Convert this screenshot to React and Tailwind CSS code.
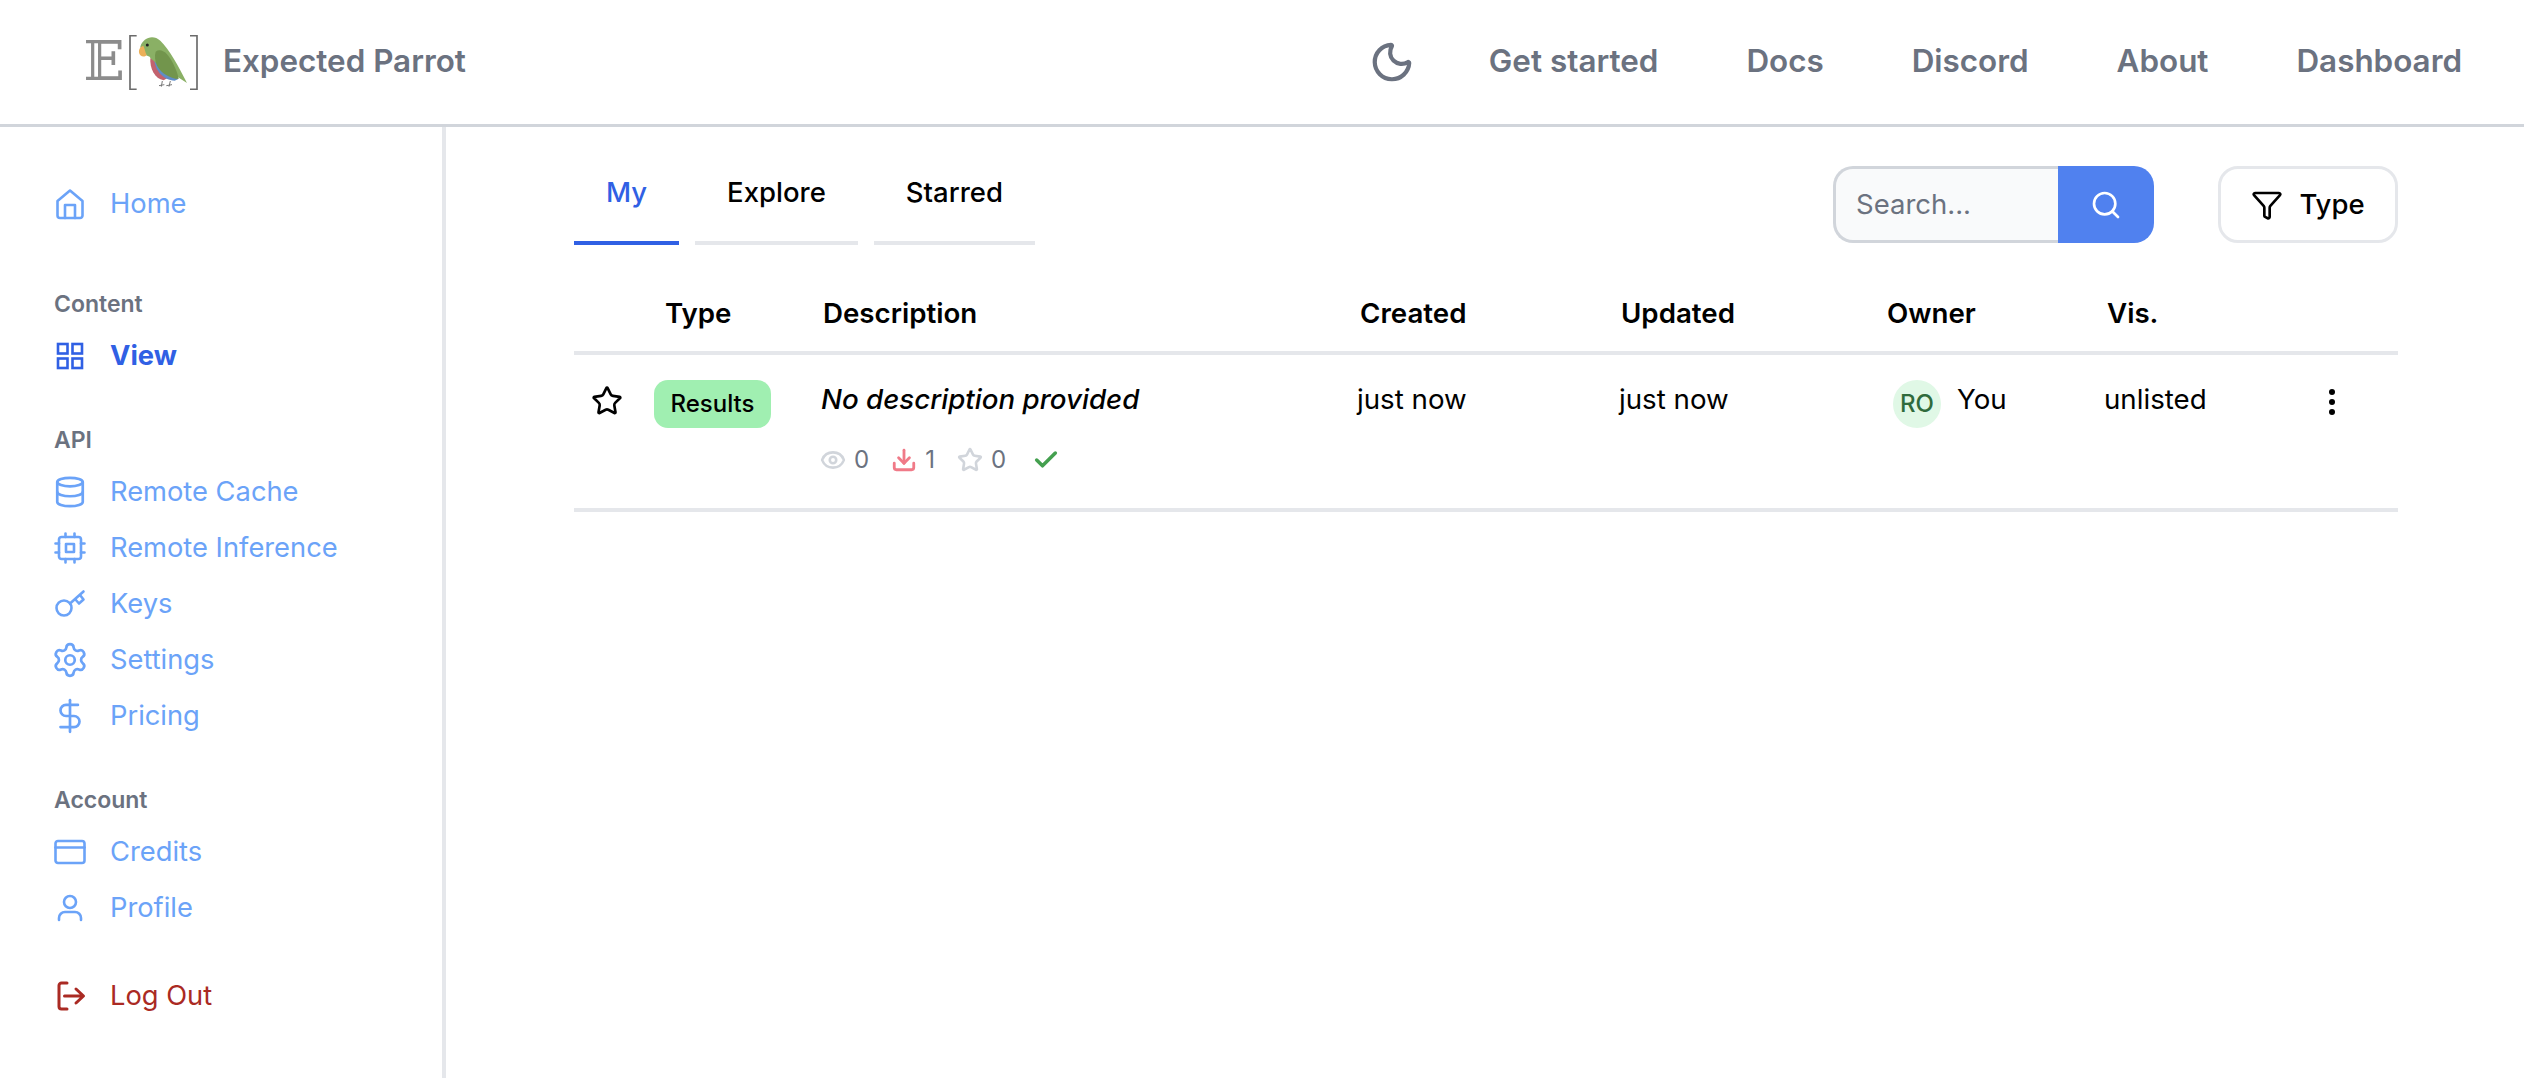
import React from 'react'
import { Moon, Settings, DollarSign, Search, Filter, Eye, Download, Star, Check, Database } from 'lucide-react'

const NAV_LINKS = ['Get started', 'Docs', 'Discord', 'About', 'Dashboard']

function Logo() {
  return (
    <div className="flex items-center">
      <span className="flex h-[40px] w-[36px] items-center justify-center font-['DejaVu_Serif',serif] text-[54px] leading-none text-[#8c8c8c]">𝔼</span>
      <svg className="ml-[7px] block" width="69" height="55" viewBox="388 100 207 165" fill="none">
        <path d="M411 102H391V263H411M571 102H592V263H571" stroke="#6b6b6b" strokeWidth="5" />
        <path d="M488 238L485 255M478 252L494 249M512 238L508 255M500 252L517 249" stroke="#777" strokeWidth="3" />
        <path d="M452 170C450 200 465 232 492 236L510 225L475 170Z" fill="#c2626e" />
        <path d="M464 175C466 205 490 236 525 237L536 232L500 190Z" fill="#5f8dc6" />
        <path d="M422 135C430 108 460 97 482 117C510 145 535 190 562 244L528 222L470 185C462 175 452 172 450 165C435 160 425 150 422 135Z" fill="#8ab065" />
        <path d="M468 150C485 138 505 155 520 185C530 205 535 220 537 232C510 230 485 215 472 192C466 178 464 162 468 150Z" fill="#72954c" />
        <path d="M431 132C418 136 414 150 422 161C428 166 436 166 441 160C436 150 436 142 431 132Z" fill="#ecb059" />
        <circle cx="443" cy="130" r="4.5" fill="#222" />
      </svg>
    </div>
  )
}

function Header() {
  return (
    <header className="flex h-[127px] items-center justify-between border-b-[3px] border-[#d1d5db] pl-[86px] pr-[62px]">
      <div className="flex items-center">
        <Logo />
        <span className="ml-[25px] text-[31.4px] font-semibold text-[#6b7280]">Expected Parrot</span>
      </div>
      <nav className="flex items-center gap-[88px] text-[31.4px] font-semibold text-[#6b7280]">
        <Moon className="-mr-[14px] h-[46px] w-[46px]" strokeWidth={2.2} />
        {NAV_LINKS.map((link) => (
          <a key={link} href="#">
            {link}
          </a>
        ))}
      </nav>
    </header>
  )
}

const iconProps = {
  width: 32,
  height: 32,
  viewBox: '0 0 32 32',
  fill: 'none',
  stroke: 'currentColor',
  strokeWidth: 2.6,
  strokeLinecap: 'round',
  strokeLinejoin: 'round',
}

const HomeIcon = () => (
  <svg {...iconProps}>
    <path d="M3.5 13L16 2.5L28.5 13V27.5A2.5 2.5 0 0 1 26 30H6A2.5 2.5 0 0 1 3.5 27.5Z" />
    <path d="M11 30V17H21V30" />
  </svg>
)

const GridIcon = () => (
  <svg {...iconProps} strokeLinejoin="miter">
    <rect x="4" y="4" width="9.5" height="9.5" />
    <rect x="18.5" y="4" width="9.5" height="9.5" />
    <rect x="4" y="18.5" width="9.5" height="9.5" />
    <rect x="18.5" y="18.5" width="9.5" height="9.5" />
  </svg>
)

const ChipIcon = () => (
  <svg {...iconProps}>
    <rect x="5" y="5" width="22" height="22" rx="2.5" />
    <rect x="12" y="12" width="8" height="8" />
    <path d="M11.5 1.5V5M20.5 1.5V5M11.5 27V30.5M20.5 27V30.5M1.5 11.5H5M1.5 20.5H5M27 11.5H30.5M27 20.5H30.5" />
  </svg>
)

const KeyIcon = () => (
  <svg {...iconProps}>
    <circle cx="10" cy="20" r="7.5" />
    <path d="M16 15.5L29.5 3.5M21 11L25 15.5L29.5 11.5L26 7" />
  </svg>
)

const CardIcon = () => (
  <svg {...iconProps}>
    <rect x="1.5" y="5" width="29" height="22" rx="2.5" />
    <path d="M1.5 11.5H30.5" />
  </svg>
)

const UserIcon = () => (
  <svg {...iconProps}>
    <circle cx="16" cy="10" r="6" />
    <path d="M5 28V26A6 6 0 0 1 11 20H21A6 6 0 0 1 27 26V28" />
  </svg>
)

const LogOutIcon = () => (
  <svg {...iconProps} strokeWidth={3}>
    <path d="M13 3H7.5A2.5 2.5 0 0 0 5 5.5V26.5A2.5 2.5 0 0 0 7.5 29H13" />
    <path d="M10.5 16H29M22 9L29.5 16L22 23" />
  </svg>
)

function SideItem({ icon, label, className = 'text-[#6ba3f8]' }) {
  return (
    <a href="#" className={`flex h-[56px] items-center gap-[24px] ${className}`}>
      <span className="flex h-8 w-8 items-center justify-center">{icon}</span>
      {label}
    </a>
  )
}

function SideLabel({ children, className = '' }) {
  return (
    <div className={`flex h-[48px] items-center text-[23px] font-semibold text-[#6b7280] ${className}`}>
      {children}
    </div>
  )
}

function Sidebar() {
  return (
    <aside className="w-[446px] shrink-0 border-r-4 border-[#e5e7eb] pl-[54px] pt-[49px] text-[27.3px]">
      <SideItem icon={<HomeIcon />} label="Home" />
      <SideLabel className="mt-12">Content</SideLabel>
      <SideItem icon={<GridIcon />} label="View" className="font-bold text-[#3060e4]" />
      <SideLabel className="mt-8">API</SideLabel>
      <SideItem icon={<Database className="h-[34px] w-[34px] shrink-0" strokeWidth={1.9} />} label="Remote Cache" />
      <SideItem icon={<ChipIcon />} label="Remote Inference" />
      <SideItem icon={<KeyIcon />} label="Keys" />
      <SideItem icon={<Settings className="h-[38px] w-[38px] shrink-0" strokeWidth={1.7} />} label="Settings" />
      <SideItem icon={<DollarSign className="h-[38px] w-[38px] shrink-0" strokeWidth={1.7} />} label="Pricing" />
      <SideLabel className="mt-8">Account</SideLabel>
      <SideItem icon={<CardIcon />} label="Credits" />
      <SideItem icon={<UserIcon />} label="Profile" />
      <div className="mt-8">
        <SideItem icon={<LogOutIcon />} label="Log Out" className="text-[#aa2a23]" />
      </div>
    </aside>
  )
}

function Toolbar() {
  const tabs = [
    { label: 'My', active: true },
    { label: 'Explore' },
    { label: 'Starred' },
  ]
  return (
    <div className="flex h-[79px] items-start justify-between">
      <div className="flex h-[79px] items-end gap-4">
        {tabs.map((tab) => (
          <button
            key={tab.label}
            className={`border-b-4 px-8 pb-[29px] text-[27.5px] font-medium leading-[40px] ${
              tab.active ? 'border-[#3060e4] text-[#3060e4]' : 'border-[#e5e7eb] text-black'
            }`}
          >
            {tab.label}
          </button>
        ))}
      </div>
      <div className="flex items-center gap-[64px]">
        <div className="flex h-[77px] w-[321px]">
          <div className="flex flex-1 items-center rounded-l-[20px] border-[3px] border-r-0 border-[#d1d5db] bg-[#f9fafb] pl-[20px] text-[27.5px] text-[#6b7280]">
            Search...
          </div>
          <button className="flex w-[96px] items-center justify-center rounded-r-[20px] bg-[#5081ef] text-white">
            <Search className="h-[32px] w-[32px]" strokeWidth={2} />
          </button>
        </div>
        <button className="flex h-[77px] w-[180px] items-center justify-center gap-[16px] rounded-[20px] border-[3px] border-[#e5e7eb] text-[27.5px] font-medium text-black">
          <Filter className="h-[32px] w-[32px]" strokeWidth={2} />
          Type
        </button>
      </div>
    </div>
  )
}

function Stat({ icon, value, className = '' }) {
  return (
    <span className={`flex items-center gap-[8px] text-[24px] text-[#6b7280] ${className}`}>
      {icon}
      {value}
    </span>
  )
}

function ResultsTable() {
  const thClass = 'pb-[18px] align-bottom font-semibold leading-[40px]'
  return (
    <table className="w-full table-fixed text-left text-[27.7px] text-black">
      <colgroup>
        <col className="w-[80px]" />
        <col className="w-[167px]" />
        <col className="w-[536px]" />
        <col className="w-[262px]" />
        <col className="w-[268px]" />
        <col className="w-[217px]" />
        <col className="w-[196px]" />
        <col />
      </colgroup>
      <thead>
        <tr className="h-[108px] border-b-4 border-[#e5e7eb]">
          <th />
          <th className={`pl-[11px] ${thClass}`}>Type</th>
          <th className={`pl-[2px] ${thClass}`}>Description</th>
          <th className={`pl-[3px] ${thClass}`}>Created</th>
          <th className={`pl-[2px] ${thClass}`}>Updated</th>
          <th className={thClass}>Owner</th>
          <th className={`pl-[3px] ${thClass}`}>Vis.</th>
          <th />
        </tr>
      </thead>
      <tbody>
        <tr className="h-[157px] border-b-4 border-[#e5e7eb] align-top">
          <td className="pl-[17px] pt-[30px]">
            <Star className="h-[32px] w-[32px]" strokeWidth={2} />
          </td>
          <td className="pt-[25px]">
            <span className="flex h-[48px] w-[117px] items-center justify-center rounded-[14px] bg-[#a0efb1] text-[24px] font-medium">
              Results
            </span>
          </td>
          <td className="pt-[24px]">
            <div className="font-medium italic leading-[40px]">No description provided</div>
            <div className="mt-[23px] flex items-center">
              <Stat icon={<Eye className="-ml-px h-[26px] w-[26px] text-[#d1d5db]" strokeWidth={2.4} />} value="0" />
              <Stat icon={<Download className="h-[26px] w-[26px] text-[#f07a88]" strokeWidth={2.6} />} value="1" className="ml-[22px]" />
              <Stat icon={<Star className="h-[26px] w-[26px] text-[#d1d5db]" strokeWidth={2.4} />} value="0" className="ml-[22px]" />
              <Check className="ml-[26px] h-[28px] w-[28px] text-[#44a04f]" strokeWidth={3} />
            </div>
          </td>
          <td className="pt-[24px] leading-[40px]">just now</td>
          <td className="pt-[24px] leading-[40px]">just now</td>
          <td className="pl-[6px] pt-[24px]">
            <div className="flex items-start gap-4">
              <span className="mt-px flex h-[48px] w-[48px] items-center justify-center rounded-full bg-[#e0f8e6] text-[24px] font-medium text-[#2f6b3c]">
                RO
              </span>
              <span className="leading-[40px]">You</span>
            </div>
          </td>
          <td className="pt-[24px] leading-[40px]">unlisted</td>
          <td className="pl-[22px] pt-[31px]">
            <svg width="20" height="32" viewBox="0 0 20 32" fill="black">
              <circle cx="10" cy="6" r="3" />
              <circle cx="10" cy="16" r="3" />
              <circle cx="10" cy="26" r="3" />
            </svg>
          </td>
        </tr>
      </tbody>
    </table>
  )
}

export default function App() {
  return (
    <div className="flex h-screen flex-col overflow-hidden bg-white font-['Inter',sans-serif]">
      <Header />
      <div className="flex flex-1">
        <Sidebar />
        <main className="flex-1 pl-[128px] pr-[126px] pt-[39px]">
          <Toolbar />
          <ResultsTable />
        </main>
      </div>
    </div>
  )
}
